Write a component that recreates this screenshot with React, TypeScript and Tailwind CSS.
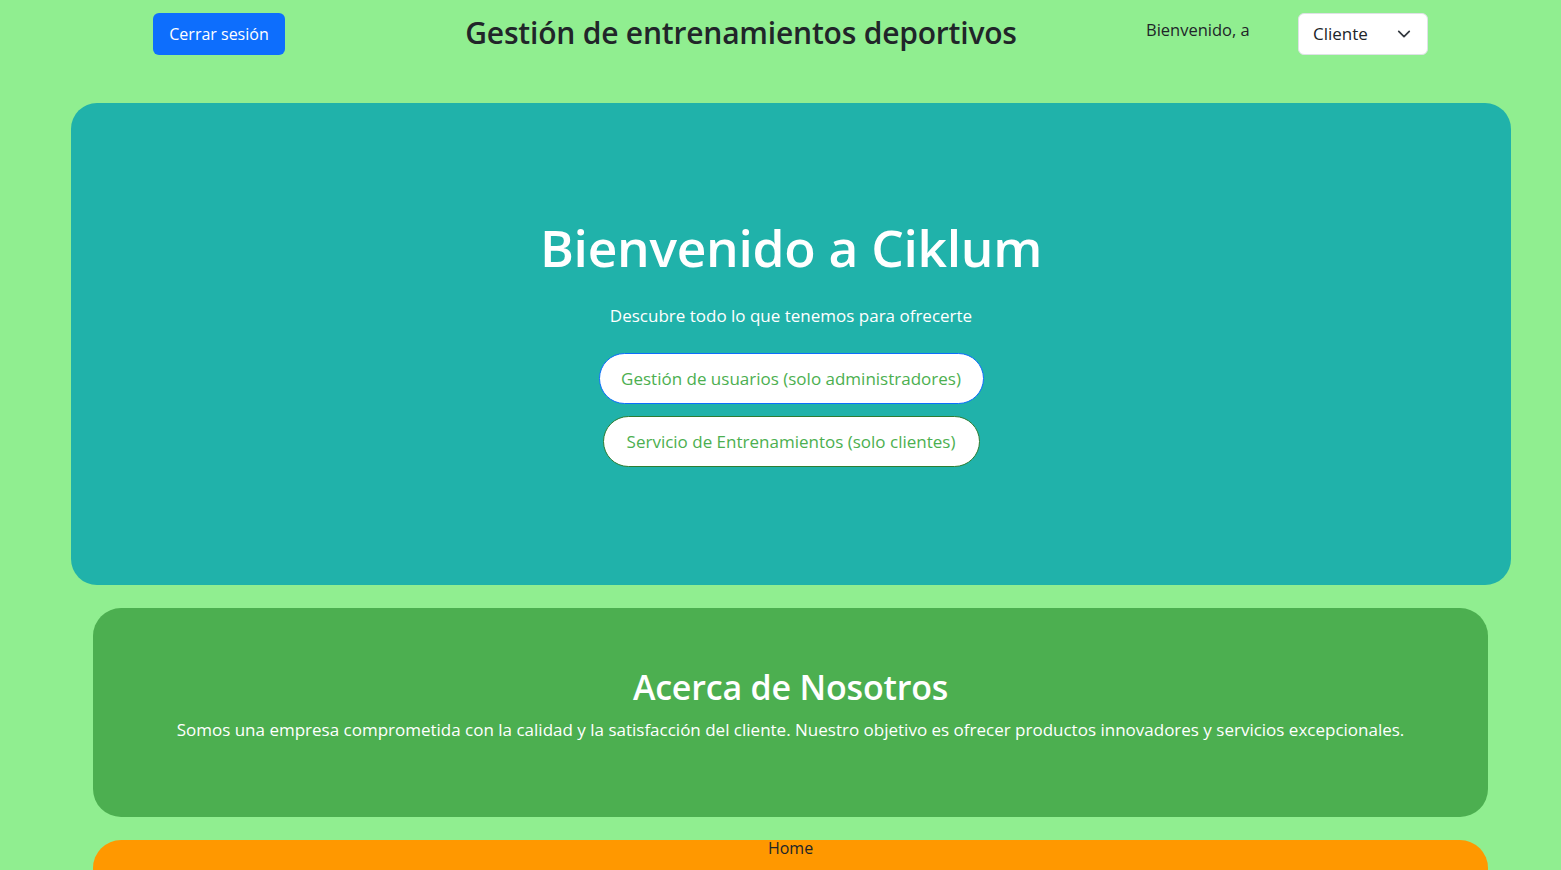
import React from "react";

export default function App() {
  const font = { fontFamily: '"Open Sans", "Noto Sans", sans-serif' };
  return (
    <div className="h-[870px] w-full bg-[#90ee90] overflow-hidden" style={font}>
      {/* Header */}
      <div className="flex h-[103px] items-start pl-[153px]">
        <button className="mt-[13px] h-[42px] w-[132px] rounded-[6px] bg-[#0d6efd] text-[16px] text-white">
          Cerrar sesión
        </button>
        <div className="ml-[156px] mt-[12px] w-[600px] text-center text-[30px] font-semibold leading-[42px] text-[#212529] tracking-[-0.2px]">
          Gestión de entrenamientos deportivos
        </div>
        <div className="ml-[105px] mt-[18px] w-[152px] text-[16.5px] leading-[24px] text-[#212529]">
          Bienvenido, a
        </div>
        <div className="mt-[13px] flex h-[42px] w-[130px] items-center justify-between rounded-[6px] border border-[#dee2e6] bg-white pl-[14px] pr-[16px] text-[17px] text-[#212529]">
          <span>Cliente</span>
          <svg width="14" height="14" viewBox="0 0 16 16" fill="none">
            <path d="M2 5l6 6 6-6" stroke="#343a40" strokeWidth="2" strokeLinecap="round" strokeLinejoin="round" />
          </svg>
        </div>
      </div>

      {/* Hero */}
      <div className="ml-[71px] flex h-[482px] w-[1440px] flex-col items-center justify-center rounded-[26px] bg-[#20b2aa] pb-[4px]">
        <h1 className="text-[51.5px] font-semibold leading-[60px] text-white tracking-[-0.3px]">Bienvenido a Ciklum</h1>
        <p className="mt-[27px] text-[17px] leading-[24px] text-white">Descubre todo lo que tenemos para ofrecerte</p>
        <button className="mt-[25px] h-[51px] w-[385px] rounded-full border border-[#0d6efd] bg-white text-[17px] text-[#4caf50]">
          Gestión de usuarios (solo administradores)
        </button>
        <button className="mt-[12px] h-[51px] w-[377px] rounded-full border border-[#2e7d32] bg-white text-[17px] text-[#4caf50]">
          Servicio de Entrenamientos (solo clientes)
        </button>
      </div>

      {/* About */}
      <div className="ml-[93px] mt-[23px] flex h-[209px] w-[1395px] flex-col items-center justify-center rounded-[28px] bg-[#4caf50] pb-[16px]">
        <h2 className="text-[34px] font-semibold leading-[42px] text-white tracking-[-0.2px]">Acerca de Nosotros</h2>
        <p className="mt-[9px] text-[17px] leading-[26px] text-white">
          Somos una empresa comprometida con la calidad y la satisfacción del cliente. Nuestro objetivo es ofrecer productos innovadores y servicios excepcionales.
        </p>
      </div>

      {/* Footer-ish */}
      <div className="ml-[93px] mt-[23px] h-[30px] w-[1395px] rounded-t-[28px] bg-[#ff9800] text-center text-[16px] leading-[16px] text-[#212529]">
        Home
      </div>
    </div>
  );
}
